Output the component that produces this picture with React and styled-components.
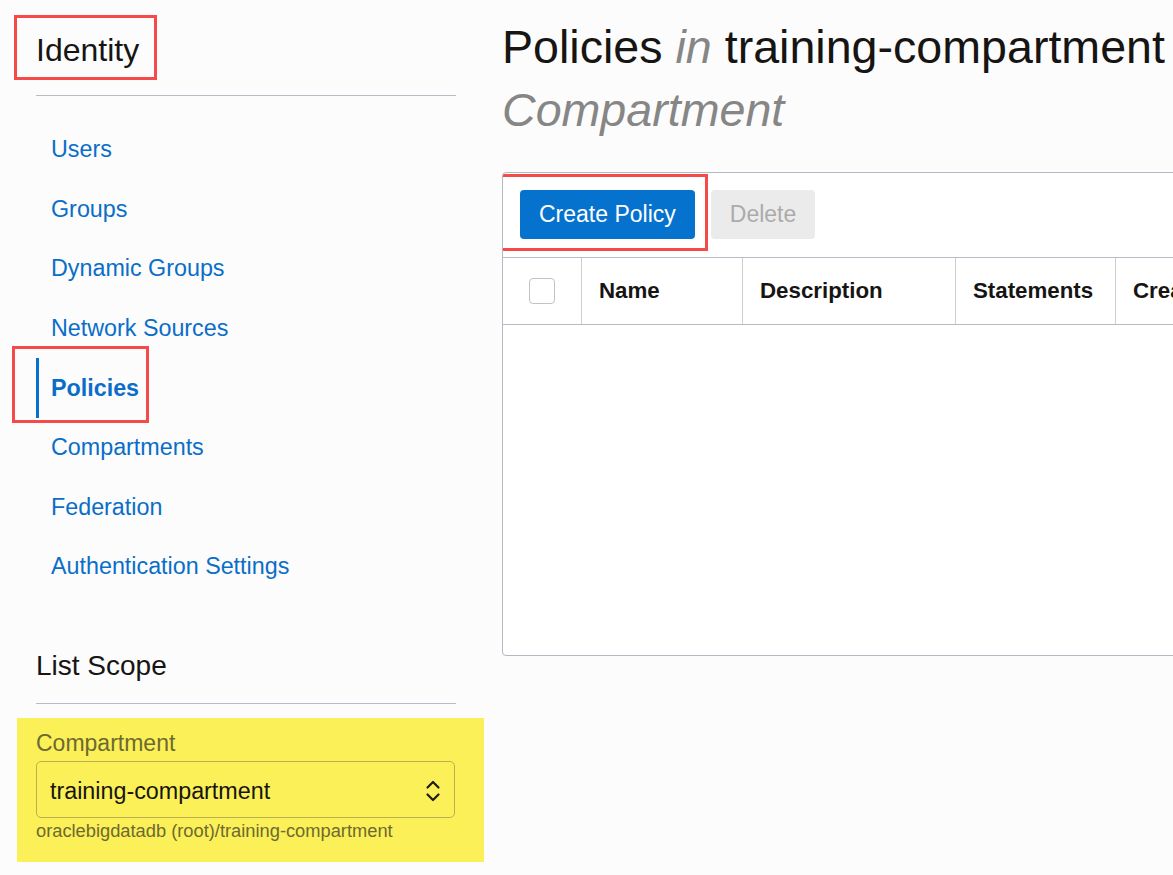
import React from "react";
import styled, { createGlobalStyle } from "styled-components";

const GlobalStyle = createGlobalStyle`
    html, body {
        margin: 0;
        padding: 0;
        background: #fcfcfc;
        overflow: hidden;
        font-family: "Liberation Sans", Arial, sans-serif;
        color: #161513;
    }
`

// 전체 화면: 왼쪽 사이드바 + 오른쪽 본문
const Page = styled.div`
    display: flex;
    flex-direction: row;
    width: 100%;
    height: 875px;
`

const Sidebar = styled.aside`
    box-sizing: border-box;
    flex: 0 0 auto;
    width: 456px;
    padding: 30px 0 0 36px;
    display: flex;
    flex-direction: column;
`

// 빨간 표시 상자 (스크린샷 위에 그려진 주석)
const Marked = styled.div`
    position: relative;
    display: ${p => p.$inline ? "inline-block" : "block"};
    align-self: ${p => p.$stretch ? "stretch" : "flex-start"};
`
const Annot = styled.span`
    position: absolute;
    top: ${p => p.$top}px;
    left: ${p => p.$left}px;
    width: ${p => p.$w}px;
    height: ${p => p.$h}px;
    box-sizing: border-box;
    border: 3px solid #f64a4a;
    pointer-events: none;
`

const SideTitle = styled.h2`
    margin: 0;
    font-size: 32px;
    font-weight: 400;
    line-height: 40px;
`

const Divider = styled.hr`
    margin: ${p => p.$mt}px 0 0 0;
    width: 420px;
    border: none;
    border-top: 1px solid #b9bcc6;
    height: 0;
`

const Nav = styled.nav`
    display: flex;
    flex-direction: column;
    margin-top: 24px;
    width: 420px;
`

const NavItem = styled.a`
    box-sizing: border-box;
    display: flex;
    align-items: center;
    height: 59.6px;
    padding-left: ${p => p.$active ? 12 : 15}px;
    border-left: ${p => p.$active ? "3px solid #0572ce" : "none"};
    font-size: 23.3px;
    font-weight: ${p => p.$active ? 700 : 400};
    color: #0a6ec8;
    text-decoration: none;
    cursor: pointer;
`

const ScopeTitle = styled.h3`
    margin: 51px 0 0 0;
    font-size: 28px;
    font-weight: 400;
    line-height: 36px;
`

// 노란 형광펜 영역
const ScopeBox = styled.div`
    box-sizing: border-box;
    margin: 14px 0 0 -19px;
    width: 467px;
    padding: 11px 29px 20px 19px;
    background: #fcf058;
`

const FieldLabel = styled.label`
    display: block;
    font-size: 23px;
    line-height: 28px;
    color: #6c6a30;
`

const Select = styled.div`
    box-sizing: border-box;
    margin-top: 4px;
    height: 57px;
    display: flex;
    align-items: center;
    justify-content: space-between;
    padding: 4px 13px 0 13px;
    border: 1px solid #b8b04e;
    border-radius: 5px;
    font-size: 23.3px;
    color: #161513;
`

const Hint = styled.div`
    margin-top: 2px;
    font-size: 18.3px;
    line-height: 22px;
    color: #6c6a30;
`

const Main = styled.main`
    flex: 1 1 auto;
    padding-left: 46px;
    min-width: 0;
`

const PageTitle = styled.h1`
    margin: 16px 0 0 0;
    font-size: 46.6px;
    font-weight: 400;
    line-height: 63px;
    white-space: nowrap;
`
const Muted = styled.em`
    color: #868686;
    font-style: italic;
`

const Panel = styled.section`
    box-sizing: border-box;
    margin-top: 30px;
    width: 760px;
    height: 484px;
    background: #fff;
    border: 1px solid #b4b8c2;
    border-radius: 4px;
    overflow: hidden;
`

const Toolbar = styled.div`
    display: flex;
    gap: 16px;
    padding: 17px 17px 18px 17px;
`

const Button = styled.button`
    height: 49px;
    padding: 0 19px;
    border: none;
    border-radius: 4px;
    font-family: "Liberation Sans", Arial, sans-serif;
    font-size: 23px;
    background: ${p => p.$primary ? "#0572ce" : "#ebebeb"};
    color: ${p => p.$primary ? "#fff" : "#ababab"};
    cursor: ${p => p.$primary ? "pointer" : "default"};
`

const HeadRow = styled.div`
    display: grid;
    grid-template-columns: 78px 161px 213px 160px 1fr;
    height: 66px;
    border-top: 1px solid #b9bcc6;
    border-bottom: 1px solid #b9bcc6;
`

const HeadCell = styled.div`
    display: flex;
    align-items: center;
    justify-content: ${p => p.$center ? "center" : "flex-start"};
    padding-left: ${p => p.$center ? 0 : 17}px;
    border-left: ${p => p.$first ? "none" : "1px solid #cfcfcf"};
    font-size: 22.3px;
    font-weight: 700;
    white-space: nowrap;
    overflow: hidden;
`

const Check = styled.span`
    box-sizing: border-box;
    width: 26px;
    height: 26px;
    border: 1px solid #c3c3c3;
    border-radius: 4px;
    background: #fff;
`

const navLinks = [
    "Users",
    "Groups",
    "Dynamic Groups",
    "Network Sources",
    "Policies",
    "Compartments",
    "Federation",
    "Authentication Settings",
]

function UpDown() {
    return (
        <svg width="16" height="24" viewBox="0 0 16 24" fill="none" stroke="#1e1d18" strokeWidth="2.2" strokeLinecap="round" strokeLinejoin="round">
            <polyline points="2.5,8.5 8,3 13.5,8.5" />
            <polyline points="2.5,15.5 8,21 13.5,15.5" />
        </svg>
    )
}

export default function App() {
    return (
        <Page>
            <GlobalStyle />
            <Sidebar>
                <Marked $inline>
                    <SideTitle>Identity</SideTitle>
                    <Annot $top={-15} $left={-22} $w={143} $h={65} />
                </Marked>
                <Divider $mt={25} />
                <Nav>
                    {navLinks.map((name) =>
                        name === "Policies" ? (
                            <Marked key={name} $stretch>
                                <NavItem $active>{name}</NavItem>
                                <Annot $top={-12} $left={-24} $w={137} $h={77} />
                            </Marked>
                        ) : (
                            <NavItem key={name}>{name}</NavItem>
                        )
                    )}
                </Nav>
                <ScopeTitle>List Scope</ScopeTitle>
                <Divider $mt={19} />
                <ScopeBox>
                    <FieldLabel>Compartment</FieldLabel>
                    <Select>
                        <span>training-compartment</span>
                        <UpDown />
                    </Select>
                    <Hint>oraclebigdatadb (root)/training-compartment</Hint>
                </ScopeBox>
            </Sidebar>
            <Main>
                <PageTitle>
                    Policies <Muted>in</Muted> training-compartment
                    <br />
                    <Muted>Compartment</Muted>
                </PageTitle>
                <Panel>
                    <Toolbar>
                        <Marked>
                            <Button $primary>Create Policy</Button>
                            <Annot $top={-16} $left={-23} $w={211} $h={77} />
                        </Marked>
                        <Button disabled>Delete</Button>
                    </Toolbar>
                    <HeadRow>
                        <HeadCell $first $center><Check /></HeadCell>
                        <HeadCell>Name</HeadCell>
                        <HeadCell>Description</HeadCell>
                        <HeadCell>Statements</HeadCell>
                        <HeadCell>Created</HeadCell>
                    </HeadRow>
                </Panel>
            </Main>
        </Page>
    )
}
